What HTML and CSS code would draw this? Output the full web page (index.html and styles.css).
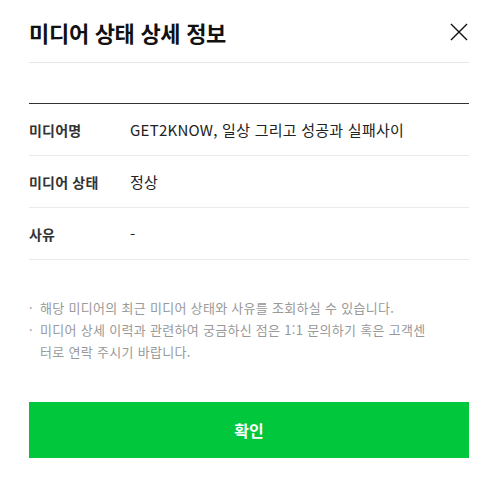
FILE: index.html
```html
<!DOCTYPE html>
<html lang="ko">
  <head>
    <meta charset="UTF-8" />
    <meta name="viewport" content="width=device-width, initial-scale=1.0" />
    <title>미디어 상태 상세 정보</title>
    <link rel="stylesheet" href="styles.css">
  </head>
  <body>
    <div class="modal">
      <div class="modal-header">
        <h1 class="modal-title">미디어 상태 상세 정보</h1>
        <button class="close-btn" type="button" aria-label="닫기">
          <svg width="18" height="18" viewBox="0 0 18 18">
            <path d="M1 1 L17 17 M17 1 L1 17" stroke="#111" stroke-width="1.4" fill="none" />
          </svg>
        </button>
      </div>

      <table class="info-table">
        <tr>
          <th>미디어명</th>
          <td>GET2KNOW, 일상 그리고 성공과 실패사이</td>
        </tr>
        <tr>
          <th>미디어 상태</th>
          <td>정상</td>
        </tr>
        <tr>
          <th>사유</th>
          <td>-</td>
        </tr>
      </table>

      <ul class="notes">
        <li>해당 미디어의 최근 미디어 상태와 사유를 조회하실 수 있습니다.</li>
        <li>미디어 상세 이력과 관련하여 궁금하신 점은 1:1 문의하기 혹은 고객센터로 연락 주시기 바랍니다.</li>
      </ul>

      <button class="confirm-btn" type="button">확인</button>
    </div>
  </body>
</html>
```

FILE: styles.css
```css
body {
  font-family: "Noto Sans CJK KR", "Noto Sans", sans-serif;
  background-color: #fff;
  margin: 0;
  color: #222;
}

.modal {
  padding: 0 29px;
}

.modal-header {
  display: flex;
  align-items: center;
  justify-content: space-between;
  padding: 20px 0 18px;
  border-bottom: 1px solid #e5e5e5;
}

.modal-title {
  margin: 0;
  font-size: 22px;
  line-height: 24px;
  font-weight: 700;
  color: #111;
  letter-spacing: -0.3px;
}

.close-btn {
  display: flex;
  padding: 0;
  margin-right: 1px;
  border: none;
  background: none;
  cursor: pointer;
}

.info-table {
  width: 100%;
  margin-top: 40px;
  border-collapse: collapse;
  border-top: 1px solid #333;
}

.info-table th,
.info-table td {
  height: 51px;
  padding: 0;
  border-bottom: 1px solid #ebebeb;
  text-align: left;
  vertical-align: middle;
}

.info-table th {
  width: 101px;
  font-size: 14px;
  font-weight: 700;
  color: #333;
  letter-spacing: 0.2px;
}

.info-table td {
  font-size: 15px;
  color: #222;
  letter-spacing: 0.25px;
}

.notes {
  margin: 37px 0 0;
  padding: 0 40px 0 11px;
  list-style: none;
  font-size: 13px;
  line-height: 22px;
  color: #999;
  letter-spacing: 0.3px;
}

.notes li {
  position: relative;
}

.notes li::before {
  content: "·";
  position: absolute;
  left: -11px;
}

.confirm-btn {
  display: block;
  width: 100%;
  height: 56px;
  margin-top: 39px;
  border: none;
  background-color: #00c73c;
  color: #fff;
  font-family: inherit;
  font-size: 16px;
  font-weight: 700;
  cursor: pointer;
}
```
